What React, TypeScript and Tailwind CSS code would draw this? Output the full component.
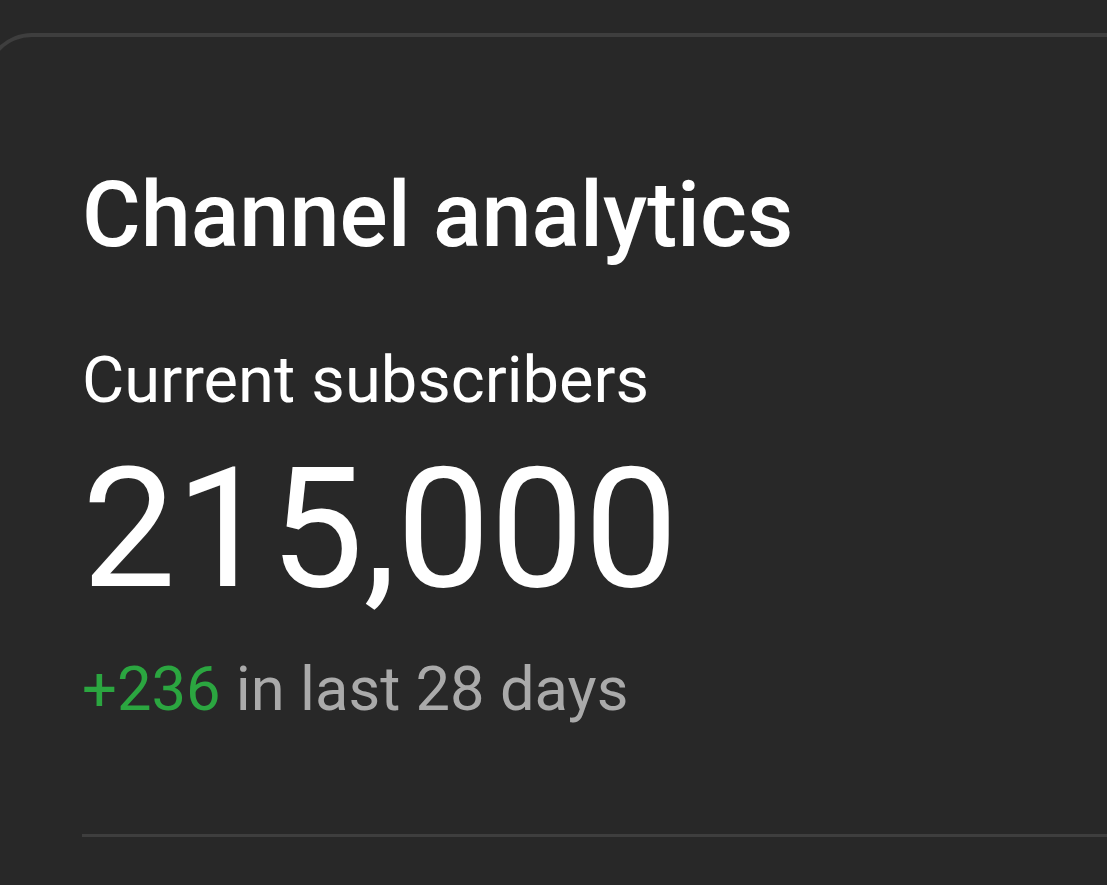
export default function App() {
  return (
    <div className="h-[885px] w-[1107px] overflow-hidden bg-[#282828] font-['Roboto',sans-serif]">
      <div className="ml-[-16px] mt-[33px] h-[1000px] rounded-tl-[48px] border-l-[4px] border-t-[4px] border-[#3e3e3e] pl-[94px] pt-[134px]">
        <h1 className="text-[90px] font-medium leading-[1] text-white">Channel analytics</h1>
        <div className="mt-[87px] text-[65px] leading-[1] text-white">Current subscribers</div>
        <div className="mt-[33px] text-[167px] leading-[1] text-white">215,000</div>
        <div className="mt-[46px] text-[61.5px] leading-[1]">
          <span className="text-[#2ba640]">+236</span>
          <span className="text-[#aaaaaa]"> in last 28 days</span>
        </div>
        <div className="mt-[113px] h-[3px] bg-[#3e3e3e]" />
      </div>
    </div>
  );
}
